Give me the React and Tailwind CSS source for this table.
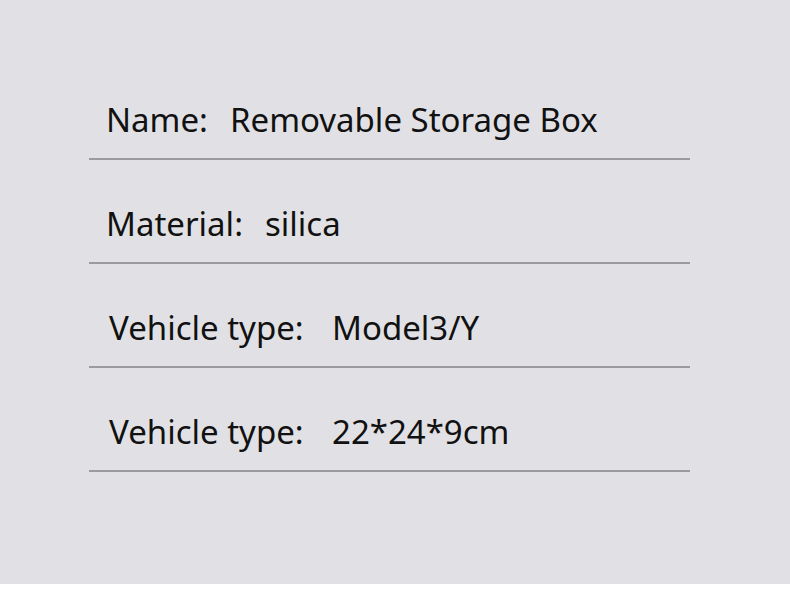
const items = [
  { label: 'Name:', value: 'Removable Storage Box', labelW: 'w-[124px]', pad: 'pl-[17px]' },
  { label: 'Material:', value: 'silica', labelW: 'w-[159px]', pad: 'pl-[17px]' },
  { label: 'Vehicle type:', value: 'Model3/Y', labelW: 'w-[223px]', pad: 'pl-[20px]' },
  { label: 'Vehicle type:', value: '22*24*9cm', labelW: 'w-[223px]', pad: 'pl-[20px]' },
]

export default function App() {
  return (
    <div className="w-[790px] h-[615px] bg-white flex flex-col">
      <div className="h-[584px] bg-[#e1e1e5] pt-[56px] pl-[89px]" style={{ fontFamily: '"Noto Sans", sans-serif' }}>
        {items.map((r, i) => (
          <div key={i} className={`w-[601px] h-[104px] border-b-2 border-[#9b9b9d] pt-[44px] ${r.pad}`}>
            <div className="flex items-center h-[40px] text-[33px] leading-[40px] text-[#111]">
              <span className={`${r.labelW} shrink-0 whitespace-nowrap`}>{r.label}</span>
              <span className="whitespace-nowrap">{r.value}</span>
            </div>
          </div>
        ))}
      </div>
    </div>
  )
}
